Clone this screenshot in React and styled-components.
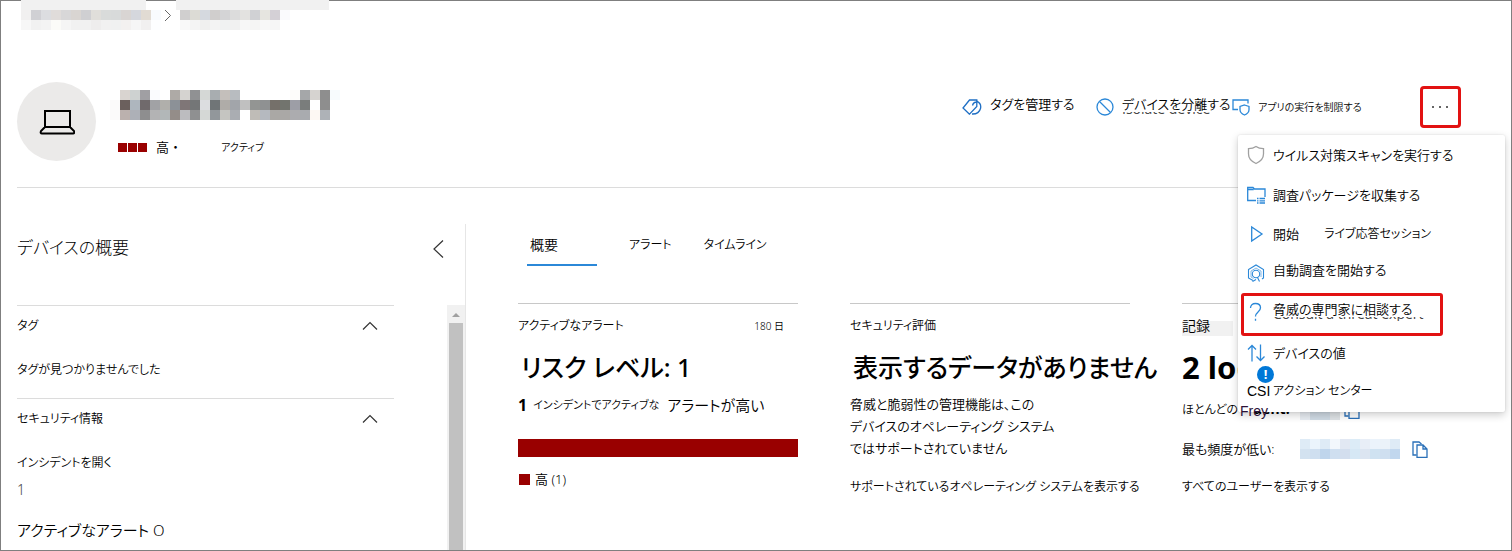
import React from "react";
import styled, { createGlobalStyle } from "styled-components";

const GlobalStyle = createGlobalStyle`
  * { box-sizing: border-box; }
  body {
    margin: 0;
    background: #fff;
    color: #000;
    font-family: "Noto Sans", "Noto Sans CJK JP", sans-serif;
    font-feature-settings: "palt";
    font-size: 13px;
    font-weight: 350;
    line-height: 20px;
  }
  button {
    font: inherit;
    font-feature-settings: inherit;
    color: inherit;
    background: none;
    border: 0;
    padding: 0;
    text-align: left;
    white-space: nowrap;
    cursor: pointer;
  }
  a { color: inherit; text-decoration: none; }
  b { font-weight: 700; }
  h1, h2, h3, p, ul { margin: 0; padding: 0; font-weight: inherit; font-size: inherit; }
  svg { display: block; flex: none; }
`;

const Page = styled.div`
  min-height: 100vh;
  display: flex;
  flex-direction: column;
  padding-bottom: 1px;
  box-shadow: inset 0 0 0 1px #7f7f7f;
  overflow: hidden;
`;

const Breadcrumb = styled.nav`
  display: flex;
  align-items: flex-start;
  padding-left: 21px;
  height: 30px;
`;

const Crumb = styled.div`
  width: ${(p) => p.$width}px;
  padding-left: ${(p) => p.$inset}px;
  &::before {
    content: "";
    display: block;
    height: 10px;
    width: ${(p) => p.$cap}px;
    margin-left: -${(p) => p.$inset}px;
    background: #f1f1f1;
  }
`;

const CrumbArrow = styled.div`
  width: 15px;
  padding: 9px 0 0 3px;
`;

const Header = styled.header`
  display: flex;
  margin: 52px 17px 0;
  padding-bottom: 26px;
  border-bottom: 1px solid #dcdcdc;
`;

const Avatar = styled.div`
  flex: none;
  width: 79px;
  height: 79px;
  border-radius: 50%;
  background: #ebeae9;
  display: grid;
  place-items: center;
`;

const DeviceInfo = styled.div`
  margin-left: 14px;
  padding-top: 8px;
`;

const StatusRow = styled.div`
  display: flex;
  align-items: center;
  padding: 18px 0 0 8px;
  line-height: 18px;
  font-feature-settings: normal;
`;

const RiskBlocks = styled.span`
  display: flex;
  gap: 1px;
  margin-right: 9px;
  i { width: 9px; height: 9px; background: #990000; }
`;

const ActiveLabel = styled.span`
  margin-left: 39px;
  font-size: 10px;
  font-feature-settings: "palt";
`;

const Commands = styled.div`
  margin: 4px 34px 0 auto;
  display: grid;
  grid-template-columns: 134px 136px 188px 41px;
  height: 42px;
`;

const Command = styled.button`
  position: relative;
  display: flex;
  align-items: center;
  gap: 8px;
  font-size: ${(p) => (p.$small ? 10 : 13)}px;
  span { padding-bottom: ${(p) => (p.$small ? 0 : 7)}px; }
`;

/* Lower slice of a longer English label that shows under the translated one */
const Ghost = styled.i`
  position: absolute;
  left: ${(p) => p.$left}px;
  top: ${(p) => p.$top}px;
  height: ${(p) => p.$height}px;
  overflow: hidden;
  display: flex;
  align-items: flex-end;
  font: normal 14px/14px "Open Sans", sans-serif;
  color: #444;
  white-space: nowrap;
`;

const MoreWrap = styled.div`
  position: relative;
`;

const MoreButton = styled.button`
  width: 41px;
  height: 42px;
  border: 3px solid #e21212;
  border-radius: 4px;
  display: grid;
  place-items: center;
`;

const Menu = styled.div`
  position: absolute;
  z-index: 2;
  top: 49px;
  right: -44px;
  width: 267px;
  display: grid;
  grid-template-rows: 40px 39px 39px 40px 43px 36px 40px;
  background: #fff;
  border-radius: 2px;
  box-shadow: 0 3px 8px rgba(0, 0, 0, 0.2), 0 0 2px rgba(0, 0, 0, 0.12);
`;

const MenuItem = styled.button`
  position: relative;
  display: flex;
  align-items: center;
  padding: 0 0 ${(p) => (p.$lifted ? 3 : 0)}px 9px;
  font-size: ${(p) => (p.$small ? 12 : 13)}px;
  span { padding-bottom: ${(p) => (p.$raised ? 6 : 0)}px; }
  ${(p) =>
    p.$marked &&
    `
    margin-left: 3px;
    width: 202px;
    padding: 0 0 6px 3px;
    border: 3px solid #e21212;
    border-radius: 3px;
  `}
`;

const MenuIcon = styled.div`
  flex: none;
  width: 26px;
  font: 400 14px/20px "Liberation Sans", sans-serif;
`;

const SessionName = styled.span`
  margin-left: 25px;
  font-size: 12px;
`;

const Alert = styled.b`
  position: absolute;
  left: 19px;
  top: -6px;
  width: 17px;
  height: 17px;
  border-radius: 50%;
  background: #0078d7;
  color: #fff;
  font-size: 13px;
  line-height: 17px;
  text-align: center;
`;

const Columns = styled.div`
  flex: 1;
  display: flex;
  padding: 36px 50px 0 17px;
`;

const Sidebar = styled.aside`
  flex: none;
  width: 449px;
  display: flex;
  flex-direction: column;
  border-right: 1px solid #e6e6e6;
`;

const SidebarHead = styled.div`
  display: flex;
  justify-content: space-between;
  height: 81px;
  padding: 12px 21px 0 0;
  h2 { font-size: 17px; line-height: 24px; font-weight: 300; }
  button { height: 26px; }
`;

const SidebarBody = styled.div`
  flex: 1;
  display: flex;
  justify-content: space-between;
`;

const Sections = styled.div`
  flex: 1;
  margin-right: 53px;
`;

const Section = styled.section`
  border-top: 1px solid #dcdcdc;
  padding-bottom: ${(p) => (p.$last ? 6 : 18)}px;
  p { margin-top: 14px; font-size: 12px; }
  p + p { margin-top: 7px; color: #444; font-size: 14px; }
`;

const SectionToggle = styled.button`
  width: 100%;
  height: 40px;
  padding-right: 16px;
  display: flex;
  align-items: center;
  justify-content: space-between;
  font-size: 12px;
`;

const ActiveAlerts = styled.div`
  margin-top: 18px;
  font-size: 15px;
  line-height: 24px;
`;

const ScrollTrack = styled.div`
  width: 18px;
  padding: 8px 2px 0;
  display: flex;
  flex-direction: column;
  align-items: center;
  gap: 6px;
  background: #f1f1f1;
`;

const ScrollThumb = styled.div`
  flex: 1;
  width: 14px;
  background: #c1c1c1;
`;

const Main = styled.main`
  flex: 1;
  min-width: 0;
  padding: 2px 0 0 52px;
`;

const Tabs = styled.div`
  display: flex;
  gap: 29px;
  padding-left: 9px;
`;

const Tab = styled.button`
  height: 40px;
  min-width: ${(p) => (p.$active ? 70 : 45)}px;
  padding: 2px 0 2px 3px;
  font-size: ${(p) => (p.$active ? 14 : 12)}px;
  border-bottom: 2px solid ${(p) => (p.$active ? "#2b88d8" : "transparent")};
`;

const Cards = styled.div`
  display: grid;
  grid-template-columns: repeat(3, minmax(0, 1fr));
  gap: 52px;
  margin-top: 37px;
`;

const Card = styled.section`
  border-top: 1px solid #c8c8c8;
  padding-top: 12px;
  white-space: nowrap;
`;

const CardTitle = styled.div`
  display: flex;
  justify-content: space-between;
  padding-right: 14px;
  font-size: 12px;
  small { font-size: 10px; }
  mark {
    width: 51px;
    font-size: 14px;
    color: inherit;
    background: linear-gradient(#fff 5px, #f1f1f1 5px);
  }
`;

const Headline = styled.h3`
  && {
    margin-top: 13px;
    padding-left: ${(p) => (p.$bold ? 0 : 3)}px;
    font-size: ${(p) => (p.$bold ? 31 : 25)}px;
    line-height: 36px;
    font-weight: ${(p) => (p.$bold ? 700 : 500)};
  }
`;

const Summary = styled.div`
  display: flex;
  align-items: center;
  margin-top: 10px;
  b { font-size: 16px; }
  span { font-size: 11px; margin: 0 8px 0 6px; }
  em { font-style: normal; font-size: 15px; }
`;

const Bar = styled.div`
  height: 18px;
  margin-top: 24px;
  background: #990000;
`;

const Legend = styled.div`
  display: flex;
  align-items: center;
  gap: 5px;
  margin-top: 12px;
  i { width: 11px; height: 11px; margin-left: 1px; background: #990000; }
`;

const Note = styled.p`
  && { margin: 8px 0 18px; line-height: 22px; }
`;

const UserRow = styled.div`
  display: grid;
  grid-template-columns: 118px 1fr;
  align-items: center;
  height: 20px;
  margin-top: ${(p) => (p.$first ? 15 : 19)}px;
`;

const UserLabel = styled.span`
  position: relative;
  font-size: ${(p) => (p.$small ? 12 : 13)}px;
`;

const FreyText = styled.span`
  position: absolute;
  z-index: 3;
  left: 58px;
  top: 1px;
  font: 400 14px/20px "Liberation Sans", sans-serif;
  color: #2c1238;
`;

const FreyTail = styled.b`
  position: absolute;
  left: 71px;
  top: -1px;
  font-size: 14px;
`;

const UserValue = styled.div`
  display: flex;
  align-items: center;
  gap: ${(p) => p.$gap}px;
`;

const CardLink = styled.a`
  display: block;
  margin-top: ${(p) => p.$top}px;
  font-size: 12px;
`;

/* Redacted text drawn as a grid of 10px tiles */
function Mosaic({ rows }) {
  const w = Math.max(...rows.map((r) => r.length)) * 10;
  return (
    <svg width={w} height={rows.length * 10} shapeRendering="crispEdges" aria-hidden="true">
      {rows.map((row, y) =>
        row.map((c, x) => <rect key={`${x}-${y}`} x={x * 10} y={y * 10} width="10" height="10" fill={`#${c}`} />)
      )}
    </svg>
  );
}

const tiles = (...rows) => rows.map((r) => r.split(" "));

const CRUMB_ONE = tiles(
  "f1f0f0 d0d0d4 dcdde0 e0dcda d8d7d8 d9d5d2 cfcfd2 e0deda d9dbda d8dada d9d5d3 d5d7dd e1dbd3 f8fbfe",
  "f7f7f7 f1f1f1 f3f3f3 fbfbf8 f5f5f5 f1f1f1 f1f1f1 eeeded f1f1f1 f0f1f1 f3f1f0 f6f6f6 f1f0f0 fdfeff"
);
const CRUMB_TWO = tiles(
  "d0cfcf dcdbd5 d5d9df d0cecd d4d4d6 dcdcdc e3e2e0 d0d1d4 e6e5e0 d4d0d6 fafafd",
  "f9f9f9 f4f4f4 f0f0ef f3f3f3 f0f2f2 f1f1f1 f7f7f7 f5f5f4 f8f8f8 f6f6f6 ffffff"
);
const DEVICE_NAME = tiles(
  "ffffff d9d4d0 ced2d1 a09fa3 fafbfe ffffff aeaaa6 d5d3d0 909193 d5d8d6 a8adb0 c4bfbb b8bcc0 ffffff ffffff ffffff ffffff ffffff fdfcfa a5a7a9 d6d3d0 8e8e8e f7fbfd",
  "fbfafa 6b605d aeb6be 706a6c a1a2a5 b0afab 8c9197 7f7677 747677 dcdde0 707577 afaca8 a2a5aa c0c0c0 939593 8f9192 75706a 72746e 9d9ea6 7a7d7c ffffff 8e8e8e ffffff",
  "fbfafa bbb1ae adb0b7 8e8e8f b3b3b4 b2b7b8 948d89 bcbcbf 8f9091 d5d8d6 92979b c5c5c1 aaadb2 ffffff bfbcb7 b5b9bf aaa8a5 aaa8a6 acacaf a9abaf fdf8f3 aeb2b7 ffffff"
);
const USER_ONE = tiles("e8edf3 d0dbe5 cfdae4 d5dde5", "e8edf3 d0dbe5 cfdae4 dfe3e6");
const USER_TWO = tiles(
  "deebf6 ebf4fc deebf6 f2f7fc e2e8f3 dcecf7 e8eef7 ebf3fb ebf2f9 deebf6",
  "d3e2f0 cfdff0 bfd5ec cfdff0 d3deee d6e8f5 dce5f1 cfe2f1 cfdff0 c1d7ee"
);

const Icon = ({ w = 20, h = 20, color = "#2b88d8", children, sw = 1.3 }) => (
  <svg width={w} height={h} viewBox={`0 0 ${w} ${h}`} fill="none" stroke={color} strokeWidth={sw} aria-hidden="true">
    {children}
  </svg>
);

const LaptopIcon = () => (
  <Icon w={36} h={26} color="#000" sw={2}>
    <path d="M6 18V2h25v16M5 18h27M6 18l-4 4q-1 2.500 1 2.500h31q2-.3 1-2.500l-4-4" />
  </Icon>
);
const TagIcon = () => (
  <Icon w={20} h={20} color="#1f6fc4">
    <path d="M7.500 17.200L1 11 7.500 3h7.300v6.500z" />
    <path d="M14.800 4.200c3 1.500 4.400 4.500 3.700 7.300-.9 3.400-4.200 5.700-8.500 5.500M10.500 8.500c.5-2.200 2.500-3.700 5-3.500" />
  </Icon>
);
const BlockIcon = () => (
  <Icon w={18} h={18}>
    <circle cx="9" cy="9" r="8" />
    <path d="M3.500 3.500l11 11" />
  </Icon>
);
const RestrictIcon = () => (
  <Icon w={18} h={18}>
    <path d="M6 11.500H1V2h15v3.500" />
    <path d="M12.500 7l4.500 1.500v3.200c0 2.500-2.200 4.300-4.500 5.300-2.300-1-4.500-2.800-4.500-5.300V8.500z" />
  </Icon>
);
const ShieldIcon = () => (
  <Icon w={18} h={20} color="#a0a0a0">
    <path d="M9 1.500C7 3 4.500 3.700 1.500 3.700V9c0 4.700 3.500 7.700 7.500 9.500 4-1.800 7.500-4.800 7.500-9.500V3.700c-3 0-5.500-.7-7.500-2.200z" />
  </Icon>
);
const PackageIcon = () => (
  <Icon w={19} h={18}>
    <path d="M9 14.500H.700V1.500h5.300l1.500 1.500h10.500v8M.700 3.500h6" />
    <path d="M10 12.500h1.500M12.500 12.500H18M10 14.800h1.500M12.500 14.800H18M10 17h1.500M12.500 17H18" />
  </Icon>
);
const PlayIcon = () => (
  <Icon w={18} h={18}>
    <path d="M4.700 2v14L15 9z" />
  </Icon>
);
const InvestigateIcon = () => (
  <Icon w={18} h={20} sw={1.1}>
    <path d="M6 17.500L1.500 15V6.500L9 2l7.500 4.500V15l-1.500 1" />
    <path d="M6.500 15.500L4 14V8l5-3 5 3v6" strokeWidth=".6" />
    <circle cx="9" cy="11" r="3.700" />
    <path d="M5.500 18.500l3.500-2M10.500 14.500l2 4" />
  </Icon>
);
const QuestionIcon = () => (
  <Icon w={18} h={20}>
    <path d="M3.500 6C3.500 3 5.500 1.500 8.500 1.500c2.800 0 5 1.500 5 4.200 0 4.300-5 4.300-5 8.800M8.500 16.700v2" />
  </Icon>
);
const ArrowsIcon = () => (
  <Icon w={18} h={18}>
    <path d="M5 17.500V1.500M1 5.500l4-4 4 4M13.500 .5v16M9.500 12.500l4 4 4-4" />
  </Icon>
);
const CopyIcon = () => (
  <Icon w={16} h={17} color="#2a70b8">
    <path d="M4.500 14H1V1h6l2.500 2" />
    <path d="M5 4h6l4 4v8.300H5zM11 4v4h4" />
  </Icon>
);
const ChevronUp = () => (
  <Icon w={16} h={10} color="#333" sw={1.2}>
    <path d="M1 8.500L8 1.500l7 7" />
  </Icon>
);
const ChevronLeft = () => (
  <Icon w={12} h={20} color="#333" sw={1.2}>
    <path d="M11 1.500L2 10l9 8.500" />
  </Icon>
);

export default function App() {
  return (
    <>
      <GlobalStyle />
      <Page>
        <Breadcrumb>
          <Crumb $width={140} $cap={125} $inset={0}>
            <Mosaic rows={CRUMB_ONE} />
          </Crumb>
          <CrumbArrow>
            <Icon w={8} h={13} color="#666" sw={1}>
              <path d="M1 1l5.500 5.500L1 12" />
            </Icon>
          </CrumbArrow>
          <Crumb $width={153} $cap={153} $inset={4}>
            <Mosaic rows={CRUMB_TWO} />
          </Crumb>
        </Breadcrumb>

        <Header>
          <Avatar>
            <LaptopIcon />
          </Avatar>
          <DeviceInfo>
            <Mosaic rows={DEVICE_NAME} />
            <StatusRow>
              <RiskBlocks>
                <i />
                <i />
                <i />
              </RiskBlocks>
              高・
              <ActiveLabel>アクティブ</ActiveLabel>
            </StatusRow>
          </DeviceInfo>
          <Commands>
            <Command>
              <TagIcon />
              <span>タグを管理する</span>
            </Command>
            <Command>
              <BlockIcon />
              <span>デバイスを分離する</span>
              <Ghost $left={26} $top={26} $height={4} aria-hidden="true">
                Isolate device
              </Ghost>
            </Command>
            <Command $small>
              <RestrictIcon />
              <span>アプリの実行を制限する</span>
            </Command>
            <MoreWrap>
              <MoreButton aria-label="その他">
                <svg width="19" height="4" fill="#333" aria-hidden="true">
                  <circle cx="2" cy="2" r="1" />
                  <circle cx="9" cy="2" r="1" />
                  <circle cx="16" cy="2" r="1" />
                </svg>
              </MoreButton>
              <Menu>
                <MenuItem>
                  <MenuIcon><ShieldIcon /></MenuIcon>
                  <span>ウイルス対策スキャンを実行する</span>
                </MenuItem>
                <MenuItem>
                  <MenuIcon><PackageIcon /></MenuIcon>
                  <span>調査パッケージを収集する</span>
                </MenuItem>
                <MenuItem>
                  <MenuIcon><PlayIcon /></MenuIcon>
                  <span>開始</span>
                  <SessionName>ライブ応答セッション</SessionName>
                </MenuItem>
                <MenuItem $raised>
                  <MenuIcon><InvestigateIcon /></MenuIcon>
                  <span>自動調査を開始する</span>
                </MenuItem>
                <MenuItem $marked $raised>
                  <MenuIcon><QuestionIcon /></MenuIcon>
                  <span>脅威の専門家に相談する</span>
                  <Ghost $left={29} $top={21} $height={4} aria-hidden="true">
                    Consult a threat expert
                  </Ghost>
                </MenuItem>
                <MenuItem $lifted>
                  <MenuIcon><ArrowsIcon /></MenuIcon>
                  <span>デバイスの値</span>
                </MenuItem>
                <MenuItem $small $lifted>
                  <Alert>!</Alert>
                  <MenuIcon>CSI</MenuIcon>
                  <span>アクション センター</span>
                </MenuItem>
              </Menu>
            </MoreWrap>
          </Commands>
        </Header>

        <Columns>
          <Sidebar>
            <SidebarHead>
              <h2>デバイスの概要</h2>
              <button aria-label="折りたたむ">
                <ChevronLeft />
              </button>
            </SidebarHead>
            <SidebarBody>
              <Sections>
                <Section>
                  <SectionToggle>
                    タグ
                    <ChevronUp />
                  </SectionToggle>
                  <p>タグが見つかりませんでした</p>
                </Section>
                <Section $last>
                  <SectionToggle>
                    セキュリティ情報
                    <ChevronUp />
                  </SectionToggle>
                  <p>インシデントを開く</p>
                  <p>1</p>
                  <ActiveAlerts>アクティブなアラート O</ActiveAlerts>
                </Section>
              </Sections>
              <ScrollTrack>
                <svg width="8" height="4" fill="#a0a0a0" aria-hidden="true">
                  <path d="M0 4l4-4 4 4z" />
                </svg>
                <ScrollThumb />
              </ScrollTrack>
            </SidebarBody>
          </Sidebar>

          <Main>
            <Tabs>
              <Tab $active>概要</Tab>
              <Tab>アラート</Tab>
              <Tab>タイムライン</Tab>
            </Tabs>
            <Cards>
              <Card>
                <CardTitle>
                  アクティブなアラート
                  <small>180 日</small>
                </CardTitle>
                <Headline>リスク レベル: 1</Headline>
                <Summary>
                  <b>1</b>
                  <span>インシデントでアクティブな</span>
                  <em>アラートが高い</em>
                </Summary>
                <Bar />
                <Legend>
                  <i />
                  高 (1)
                </Legend>
              </Card>
              <Card>
                <CardTitle>セキュリティ評価</CardTitle>
                <Headline>表示するデータがありません</Headline>
                <Note>
                  脅威と脆弱性の管理機能は、この
                  <br />
                  デバイスのオペレーティング システム
                  <br />
                  ではサポートされていません
                </Note>
                <CardLink href="#" $top={0}>サポートされているオペレーティング システムを表示する</CardLink>
              </Card>
              <Card>
                <CardTitle>
                  <mark>記録</mark>
                </CardTitle>
                <Headline $bold>2 logged on</Headline>
                <UserRow $first>
                  <UserLabel $small>
                    ほとんどの
                    <FreyText>Frey</FreyText>
                    <FreyTail>uent:</FreyTail>
                  </UserLabel>
                  <UserValue $gap={4}>
                    <Mosaic rows={USER_ONE} />
                    <CopyIcon />
                  </UserValue>
                </UserRow>
                <UserRow>
                  <UserLabel>最も頻度が低い:</UserLabel>
                  <UserValue $gap={12}>
                    <Mosaic rows={USER_TWO} />
                    <CopyIcon />
                  </UserValue>
                </UserRow>
                <CardLink href="#" $top={18}>すべてのユーザーを表示する</CardLink>
              </Card>
            </Cards>
          </Main>
        </Columns>
      </Page>
    </>
  );
}
